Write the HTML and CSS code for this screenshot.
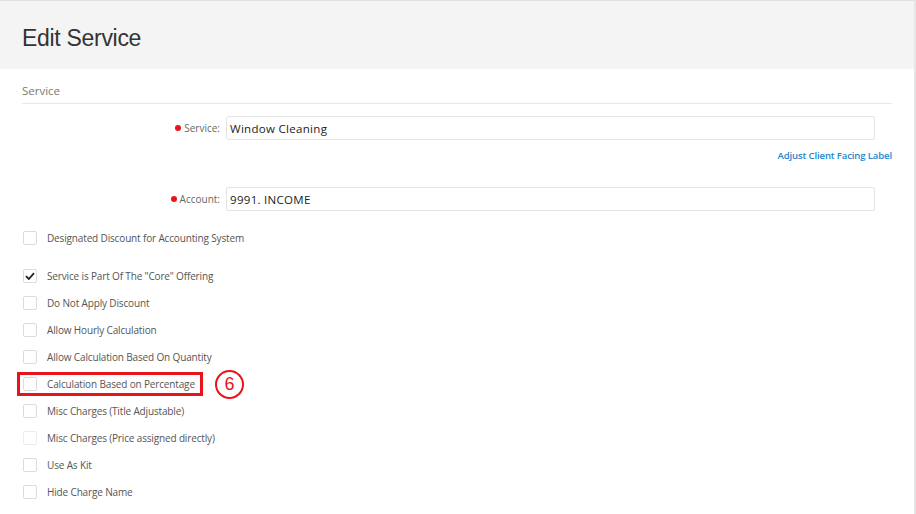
FILE: index.html
```html
<!DOCTYPE html>
<html>
<head>
<meta charset="utf-8">
<link rel="stylesheet" href="styles.css">
</head>
<body>
<div class="page">
  <header class="page-header">
    <h1 class="title">Edit Service</h1>
  </header>
  <main class="content">
    <h2 class="section-title">Service</h2>
    <div class="form-row row-service">
      <label class="field-label"><span class="req"></span>Service:</label>
      <div class="input">Window Cleaning</div>
    </div>
    <div class="link-row"><a class="link">Adjust Client Facing Label</a></div>
    <div class="form-row row-account">
      <label class="field-label"><span class="req"></span>Account:</label>
      <div class="input">9991. INCOME</div>
    </div>
    <div class="checks">
      <div class="check first"><span class="box"></span><span class="check-label">Designated Discount for Accounting System</span></div>
      <div class="check gap"><span class="box checked"><svg width="10" height="8" viewBox="0 0 10 8"><path d="M1 4.2 L3.8 7 L9 1.2" fill="none" stroke="#222" stroke-width="1.8"/></svg></span><span class="check-label">Service is Part Of The "Core" Offering</span></div>
      <div class="check"><span class="box"></span><span class="check-label">Do Not Apply Discount</span></div>
      <div class="check"><span class="box"></span><span class="check-label">Allow Hourly Calculation</span></div>
      <div class="check"><span class="box"></span><span class="check-label">Allow Calculation Based On Quantity</span></div>
      <div class="check highlight"><span class="box"></span><span class="check-label">Calculation Based on Percentage</span><span class="callout">6</span></div>
      <div class="check"><span class="box"></span><span class="check-label">Misc Charges (Title Adjustable)</span></div>
      <div class="check"><span class="box faint"></span><span class="check-label">Misc Charges (Price assigned directly)</span></div>
      <div class="check"><span class="box"></span><span class="check-label">Use As Kit</span></div>
      <div class="check"><span class="box"></span><span class="check-label">Hide Charge Name</span></div>
    </div>
  </main>
</div>
</body>
</html>
```
FILE: styles.css
```css
html, body {
  margin: 0;
  padding: 0;
  background: #fff;
}
.page {
  width: 916px;
  height: 514px;
  border-right: 2px solid #e6e6e6;
  border-top: 1px solid #e2e2e2;
  box-sizing: border-box;
  overflow: hidden;
  font-family: "Open Sans", "Noto Sans", sans-serif;
}
.page-header {
  background: #f4f4f4;
  height: 68px;
  padding: 6px 22px 0;
  box-sizing: border-box;
  display: flex;
  align-items: center;
}
.title {
  margin: 0;
  font-family: "Liberation Sans", Arial, sans-serif;
  font-weight: normal;
  font-size: 23px;
  color: #333;
  letter-spacing: -0.3px;
}
.content {
  padding: 0 22px;
}
.section-title {
  margin: 0;
  padding-top: 14px;
  padding-bottom: 5px;
  font-weight: normal;
  font-size: 11.5px;
  color: #777;
  border-bottom: 1px solid #e8e8e8;
  line-height: 15px;
}
.form-row {
  display: grid;
  grid-template-columns: 198px 649px;
  column-gap: 6px;
  align-items: center;
}
.row-service { margin-top: 12px; }
.row-account { margin-top: 23px; }
.field-label {
  text-align: right;
  font-size: 10px;
  color: #666;
  display: flex;
  justify-content: flex-end;
  align-items: center;
  gap: 3px;
}
.req {
  width: 6px;
  height: 6px;
  border-radius: 50%;
  background: #e8141b;
  display: inline-block;
}
.input {
  height: 24px;
  border: 1px solid #e4e4e4;
  border-radius: 2px;
  box-sizing: border-box;
  padding: 0 3px;
  font-size: 11.5px;
  color: #222;
  display: flex;
  align-items: center;
  letter-spacing: 0.3px;
}
.link-row {
  display: flex;
  justify-content: flex-end;
  margin-top: 8px;
  line-height: 16px;
}
.link {
  color: #1f86cf;
  font-size: 9.6px;
  font-weight: 600;
  letter-spacing: -0.15px;
}
.checks {
  display: flex;
  flex-direction: column;
  margin-top: 13px;
}
.check {
  display: flex;
  align-items: center;
  height: 27px;
  position: relative;
}
.check.gap { margin-top: 11px; }
.box {
  width: 14px;
  height: 14px;
  border: 1px solid #dcdcdc;
  border-radius: 2px;
  box-sizing: border-box;
  margin-left: 1px;
  margin-right: 10px;
  display: flex;
  align-items: center;
  justify-content: center;
}
.box.faint { border-color: #ececec; }
.check-label {
  font-size: 10px;
  letter-spacing: -0.15px;
  color: #555;
}
.highlight::before {
  content: "";
  position: absolute;
  left: -5px;
  top: 2px;
  width: 186px;
  height: 24px;
  border: 3px solid #e8141b;
  box-sizing: border-box;
}
.callout {
  position: absolute;
  left: 193px;
  top: 0;
  width: 29px;
  height: 29px;
  border: 2px solid #e8141b;
  border-radius: 50%;
  box-sizing: border-box;
  color: #e8141b;
  font-family: "Liberation Sans", Arial, sans-serif;
  font-size: 18px;
  display: flex;
  align-items: center;
  justify-content: center;
}
```
